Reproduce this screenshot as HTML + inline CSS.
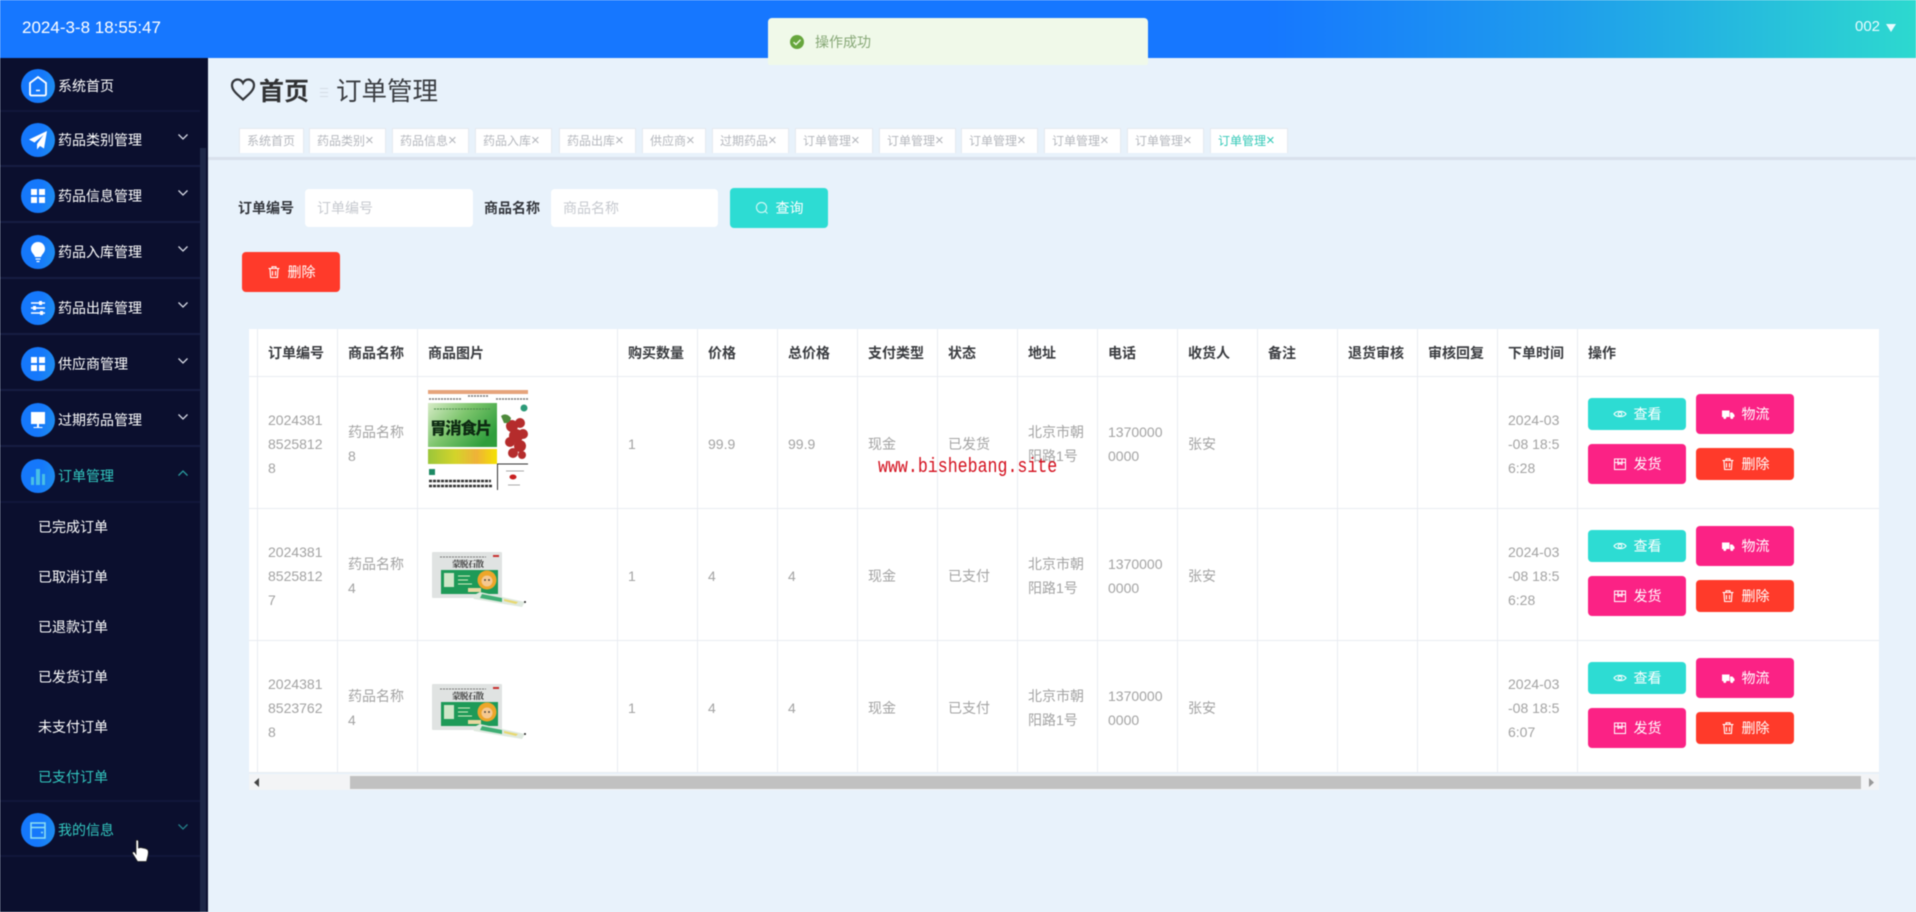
<!DOCTYPE html>
<html lang="zh-CN">
<head>
<meta charset="utf-8">
<title>订单管理</title>
<style>
*{box-sizing:border-box;margin:0;padding:0}
html,body{width:1916px;height:912px;overflow:hidden}
body{position:relative;background:#e8f2fb;font-family:"Liberation Sans","Noto Sans CJK SC",sans-serif;font-size:14px;color:#333;filter:blur(.45px)}
.a{position:absolute}
#hdr{left:0;top:0;width:1916px;height:58px;background:linear-gradient(90deg,#1677ff 0%,#1677ff 66%,#1f9eec 82%,#2dd9cf 100%)}
#date{left:22px;top:18px;font-size:17px;line-height:20px;color:#fff;white-space:nowrap}
#user{left:1855px;top:17px;font-size:15px;line-height:20px;color:#e8fbff}
#tri{left:1886px;top:24px;width:0;height:0;border-left:5.5px solid transparent;border-right:5.5px solid transparent;border-top:8px solid #e8fbff}
#toast{left:768px;top:18px;width:380px;height:47px;background:#f0f9e9;border-radius:4px 4px 2px 2px;z-index:5}
#toast span{position:absolute;left:47px;top:13px;line-height:22px;color:#87a877;white-space:nowrap}
#side{left:0;top:58px;width:208px;height:854px;background:#0b0f2e}
#sb{left:200px;top:148px;width:6px;height:764px;background:#1e2747;z-index:2}
.sep{position:absolute;left:0;width:200px;height:2px;background:#171c42;z-index:1}
.sep.f{background:#12173a}
.mi{position:absolute;left:58px;color:#fff;line-height:20px;white-space:nowrap;z-index:3}
.sub{position:absolute;left:38px;color:#fff;line-height:20px;white-space:nowrap;z-index:3}
.tl{color:#33c8c0}
.ic{position:absolute;left:21px;width:34px;height:34px;border-radius:50%;background:linear-gradient(100deg,#1578fb 55%,#1f90ec);z-index:3}
.ic svg{display:block}
.cv{position:absolute;left:177px;z-index:3}
#crumb1{left:259px;top:75px;font-size:25px;font-weight:700;line-height:34px;color:#303133;white-space:nowrap}
#crumb2{left:336px;top:75px;font-size:25.5px;line-height:34px;color:#3a3d42;white-space:nowrap}
#csep{left:320px;top:88px;width:8px;height:12px;background:repeating-linear-gradient(180deg,#d4dce6 0 1px,transparent 1px 4px)}
.tab{position:absolute;top:128px;height:25px;background:#fff;border:1px solid #e6e9ef;border-bottom:0;font-size:12px;line-height:24px;color:#b4b7bd;padding-left:7px;white-space:nowrap}
.tab i{font-style:normal;font-size:15px;line-height:0}
#tline{left:208px;top:157px;width:1708px;height:3px;background:#d9e1ec}
.lab{position:absolute;top:198px;font-weight:700;color:#33363c;line-height:20px;white-space:nowrap}
.inp{position:absolute;top:189px;height:38px;background:#fff;border-radius:4px;color:#c6c9cf;line-height:38px;padding-left:12px;white-space:nowrap}
.btn{position:absolute;border-radius:4px;color:#fff;text-align:center;white-space:nowrap;display:flex;align-items:center;justify-content:center;gap:7px;font-size:14px}
.teal{background:#2ddcd3}.pink{background:#fb2285}.red{background:#ff3a2a}
table{position:absolute;left:249px;top:329px;width:1630px;border-collapse:separate;border-spacing:0;table-layout:fixed;background:#fff}
td,th{border-right:1px solid #e9ecf1;border-bottom:1px solid #e9ecf1;padding:0 10px;text-align:left;vertical-align:middle;line-height:24px;white-space:nowrap;overflow:hidden;font-size:14px}
th{height:48px;font-weight:700;color:#3a3c40}
td{height:132px;color:#a3a3a3;padding-top:2px}
td:first-child,th:first-child{padding:0}
td:last-child,th:last-child{border-right:0}
#track{left:249px;top:774px;width:1630px;height:16px;background:#f3f4f6}
#thumb{left:350px;top:776px;width:1511px;height:13px;background:#c1c1c1}
#wm{left:878px;top:456px;font-family:"Liberation Mono",monospace;font-size:16.6px;line-height:22px;color:#d4101e;white-space:nowrap;z-index:4;transform:scaleY(1.2)}
#cur{left:131px;top:839px;z-index:6}
</style>
</head>
<body>
<svg width="0" height="0" style="position:absolute">
<symbol id="eye" viewBox="0 0 14 14"><path d="M1 7C3 3.500 11 3.500 13 7C11 10.500 3 10.500 1 7Z" fill="none" stroke="#fff" stroke-width="1.100"/><circle cx="7" cy="7" r="1.800" fill="none" stroke="#fff" stroke-width="1"/></symbol>
<symbol id="trk" viewBox="0 0 14 14"><path d="M1 3.500H8.500V10H1ZM9 5.500H11.500L13.500 8V10H9Z" fill="#fff"/><circle cx="3.800" cy="10.500" r="1.500" fill="#fff"/><circle cx="10.800" cy="10.500" r="1.500" fill="#fff"/></symbol>
<symbol id="box" viewBox="0 0 14 14"><path d="M1.500 2H12.500V12.500H1.500ZM1.500 5.500H12.500M5 2V7.500L7 6.500L9 7.500V2" fill="none" stroke="#fff" stroke-width="1"/></symbol>
<symbol id="trs" viewBox="0 0 14 14"><path d="M1.500 3.500H12.500M5 3.500V1.800H9V3.500M3 3.500L3.600 12.500H10.400L11 3.500M5.500 6V10.500M8.500 6V10.500" fill="none" stroke="#fff" stroke-width="1.100"/></symbol>
<symbol id="dn" viewBox="0 0 12 8"><path d="M1.500 1.500L6 6L10.500 1.500" fill="none" stroke="currentColor" stroke-width="1.300"/></symbol>
</svg>

<div class="a" id="hdr"></div>
<div class="a" id="date">2024-3-8 18:55:47</div>
<div class="a" id="user">002</div>
<div class="a" id="tri"></div>

<div class="a" id="toast">
<svg class="a" style="left:21px;top:16px" width="16" height="16" viewBox="0 0 16 16"><circle cx="8" cy="8" r="7" fill="#66a63c"/><path d="M4.500 8.200L7 10.500L11.500 5.800" fill="none" stroke="#e8f5dc" stroke-width="1.500"/></svg>
<span>操作成功</span>
</div>

<div class="a" id="side"></div>
<div class="a" id="sb"></div>
<div class="sep f" style="top:110px"></div>
<div class="sep" style="top:165px"></div>
<div class="sep" style="top:221px"></div>
<div class="sep" style="top:277px"></div>
<div class="sep" style="top:333px"></div>
<div class="sep" style="top:389px"></div>
<div class="sep" style="top:445px"></div>
<div class="sep f" style="top:501px"></div>
<div class="sep f" style="top:800px"></div>
<div class="sep f" style="top:855px"></div>

<div class="ic" style="top:69px"><svg width="34" height="34" viewBox="0 0 34 34"><path d="M17 8L25 14V25Q25 26.500 23.500 26.500H10.500Q9 26.500 9 25V14Z" fill="none" stroke="#fff" stroke-width="1.800"/><path d="M15 21.500H19" stroke="#fff" stroke-width="1.500"/></svg></div>
<div class="mi" style="top:76px">系统首页</div>

<div class="ic" style="top:123px"><svg width="34" height="34" viewBox="0 0 34 34"><path d="M26 8L8 16.500L13.500 19.500L22.500 12L16 21V26.500L19 23L23 25.500Z" fill="#fff"/></svg></div>
<div class="mi" style="top:130px">药品类别管理</div>
<svg class="cv" style="top:133px;color:#d5d8e4" width="12" height="8"><use href="#dn"/></svg>

<div class="ic" style="top:179px"><svg width="34" height="34" viewBox="0 0 34 34"><path d="M10 10H16V16H10ZM18 10H24V16H18ZM10 18H16V24H10ZM18 18H24V24H18Z" fill="#fff"/></svg></div>
<div class="mi" style="top:186px">药品信息管理</div>
<svg class="cv" style="top:189px;color:#d5d8e4" width="12" height="8"><use href="#dn"/></svg>

<div class="ic" style="top:235px"><svg width="34" height="34" viewBox="0 0 34 34"><path d="M17 7C12.500 7 10 10.500 10 14C10 17.500 13 19 14 22H20C21 19 24 17.500 24 14C24 10.500 21.500 7 17 7Z" fill="#fff"/><path d="M14.500 24H19.500M15.500 26.500H18.500" stroke="#fff" stroke-width="1.300"/></svg></div>
<div class="mi" style="top:242px">药品入库管理</div>
<svg class="cv" style="top:245px;color:#d5d8e4" width="12" height="8"><use href="#dn"/></svg>

<div class="ic" style="top:291px"><svg width="34" height="34" viewBox="0 0 34 34"><path d="M10 12H24M10 17H24M10 22H24" stroke="#fff" stroke-width="1.600"/><rect x="18" y="10" width="3" height="4" fill="#fff"/><rect x="12" y="15" width="3" height="4" fill="#fff"/><rect x="19" y="20" width="3" height="4" fill="#fff"/></svg></div>
<div class="mi" style="top:298px">药品出库管理</div>
<svg class="cv" style="top:301px;color:#d5d8e4" width="12" height="8"><use href="#dn"/></svg>

<div class="ic" style="top:347px"><svg width="34" height="34" viewBox="0 0 34 34"><path d="M10 10H16V16H10ZM18 10H24V16H18ZM10 18H16V24H10ZM18 18H24V24H18Z" fill="#fff"/></svg></div>
<div class="mi" style="top:354px">供应商管理</div>
<svg class="cv" style="top:357px;color:#d5d8e4" width="12" height="8"><use href="#dn"/></svg>

<div class="ic" style="top:403px"><svg width="34" height="34" viewBox="0 0 34 34"><path d="M10 9H24V21H10ZM16 21H18V24H16ZM12.500 24H21.500V25H12.500Z" fill="#fff"/></svg></div>
<div class="mi" style="top:410px">过期药品管理</div>
<svg class="cv" style="top:413px;color:#d5d8e4" width="12" height="8"><use href="#dn"/></svg>

<div class="ic" style="top:459px"><svg width="34" height="34" viewBox="0 0 34 34"><path d="M10 18H13V26H10ZM15 10H19V26H15ZM21 15H24V26H21Z" fill="#48bfe6"/></svg></div>
<div class="mi tl" style="top:466px">订单管理</div>
<svg class="cv" style="top:469px;color:#2a9a9e;transform:scaleY(-1)" width="12" height="8"><use href="#dn"/></svg>

<div class="sub" style="top:517px">已完成订单</div>
<div class="sub" style="top:567px">已取消订单</div>
<div class="sub" style="top:617px">已退款订单</div>
<div class="sub" style="top:667px">已发货订单</div>
<div class="sub" style="top:717px">未支付订单</div>
<div class="sub tl" style="top:767px">已支付订单</div>

<div class="ic" style="top:813px"><svg width="34" height="34" viewBox="0 0 34 34"><path d="M10 10H24V25H10ZM10 14.500H24M20 19.500H22" fill="none" stroke="#8fe0f2" stroke-width="1.500"/></svg></div>
<div class="mi tl" style="top:820px">我的信息</div>
<svg class="cv" style="top:823px;color:#247f88" width="12" height="8"><use href="#dn"/></svg>

<svg class="a" id="cur" width="19" height="25" viewBox="0 0 19 25"><path d="M5 1.500C6 .5 7.500 1 7.500 2.500V9L9.500 8.500L12 9L14.500 9.500L16.500 10.500C17.500 11.500 17.500 14 17 16.500L15.500 22.500H6.500L1.500 14.500C1 13 2.500 12 4 13.500L5 15Z" fill="#fff" stroke="#222" stroke-width=".8"/></svg>

<svg class="a" style="left:230px;top:77px" width="26" height="25" viewBox="0 0 26 25"><path d="M13 22.500C6 16.500 2 12.800 2 8.200C2 4.800 4.600 2.500 7.500 2.500C9.800 2.500 11.800 3.700 13 6C14.200 3.700 16.200 2.500 18.500 2.500C21.400 2.500 24 4.800 24 8.200C24 12.800 20 16.500 13 22.500Z" fill="none" stroke="#33363b" stroke-width="2.200"/></svg>
<div class="a" id="crumb1">首页</div>
<div class="a" id="csep"></div>
<div class="a" id="crumb2">订单管理</div>

<div class="tab" style="left:239px;width:65px">系统首页</div>
<div class="tab" style="left:309px;width:77px">药品类别<i>×</i></div>
<div class="tab" style="left:392px;width:77px">药品信息<i>×</i></div>
<div class="tab" style="left:475px;width:77px">药品入库<i>×</i></div>
<div class="tab" style="left:559px;width:77px">药品出库<i>×</i></div>
<div class="tab" style="left:642px;width:64px">供应商<i>×</i></div>
<div class="tab" style="left:712px;width:77px">过期药品<i>×</i></div>
<div class="tab" style="left:795px;width:78px">订单管理<i>×</i></div>
<div class="tab" style="left:879px;width:77px">订单管理<i>×</i></div>
<div class="tab" style="left:961px;width:77px">订单管理<i>×</i></div>
<div class="tab" style="left:1044px;width:77px">订单管理<i>×</i></div>
<div class="tab" style="left:1127px;width:77px">订单管理<i>×</i></div>
<div class="tab" style="left:1210px;width:78px;color:#35c9b8">订单管理<i>×</i></div>
<div class="a" id="tline"></div>

<div class="lab" style="left:238px">订单编号</div>
<div class="inp" style="left:305px;width:168px">订单编号</div>
<div class="lab" style="left:484px">商品名称</div>
<div class="inp" style="left:551px;width:167px">商品名称</div>
<div class="btn teal" style="left:730px;top:188px;width:98px;height:40px"><svg width="14" height="14" viewBox="0 0 14 14"><circle cx="6.500" cy="6.500" r="5" fill="none" stroke="#c8f7f4" stroke-width="1.200"/><path d="M10 10L12.500 12.500" stroke="#c8f7f4" stroke-width="1.200"/></svg>查询</div>
<div class="btn red" style="left:242px;top:252px;width:98px;height:40px"><svg width="14" height="14"><use href="#trs"/></svg>删除</div>

<table>
<colgroup><col style="width:9px"><col style="width:80px"><col style="width:80px"><col style="width:200px"><col style="width:80px"><col style="width:80px"><col style="width:80px"><col style="width:80px"><col style="width:80px"><col style="width:80px"><col style="width:80px"><col style="width:80px"><col style="width:80px"><col style="width:80px"><col style="width:80px"><col style="width:80px"><col style="width:301px"></colgroup>
<tr><th></th><th>订单编号</th><th>商品名称</th><th>商品图片</th><th>购买数量</th><th>价格</th><th>总价格</th><th>支付类型</th><th>状态</th><th>地址</th><th>电话</th><th>收货人</th><th>备注</th><th>退货审核</th><th>审核回复</th><th>下单时间</th><th>操作</th></tr>
<tr><td></td><td>2024381<br>8525812<br>8</td><td>药品名称<br>8</td><td></td><td>1</td><td>99.9</td><td>99.9</td><td>现金</td><td>已发货</td><td>北京市朝<br>阳路1号</td><td>1370000<br>0000</td><td>张安</td><td></td><td></td><td></td><td>2024-03<br>-08 18:5<br>6:28</td><td></td></tr>
<tr><td></td><td>2024381<br>8525812<br>7</td><td>药品名称<br>4</td><td></td><td>1</td><td>4</td><td>4</td><td>现金</td><td>已支付</td><td>北京市朝<br>阳路1号</td><td>1370000<br>0000</td><td>张安</td><td></td><td></td><td></td><td>2024-03<br>-08 18:5<br>6:28</td><td></td></tr>
<tr><td></td><td>2024381<br>8523762<br>8</td><td>药品名称<br>4</td><td></td><td>1</td><td>4</td><td>4</td><td>现金</td><td>已支付</td><td>北京市朝<br>阳路1号</td><td>1370000<br>0000</td><td>张安</td><td></td><td></td><td></td><td>2024-03<br>-08 18:5<br>6:07</td><td></td></tr>
</table>

<svg class="a" style="left:428px;top:390px" width="101" height="100" viewBox="0 0 101 100">
<defs>
<linearGradient id="g1" x1="0" y1="0" x2="1" y2=".6"><stop offset="0" stop-color="#d8ecc8"/><stop offset=".5" stop-color="#7cc46c"/><stop offset="1" stop-color="#2f9e3c"/></linearGradient>
<linearGradient id="g2" x1="0" x2="1"><stop offset="0" stop-color="#9cc63a"/><stop offset=".4" stop-color="#d4d42a"/><stop offset=".7" stop-color="#efb238"/><stop offset="1" stop-color="#f4e202"/></linearGradient>
</defs>
<rect width="101" height="100" fill="#fff"/>
<rect width="100" height="4" fill="#e6a47c"/>
<path d="M1 9H34M40 6H60M68 9H100" stroke="#777" stroke-width="1.500" stroke-dasharray="2 1"/>
<rect y="13" width="69" height="44" fill="url(#g1)"/>
<path d="M6 19H62" stroke="#4a8a4a" stroke-width="1" stroke-dasharray="2 1"/>
<text x="2" y="44" font-family="'Noto Sans CJK SC',sans-serif" font-size="16.500" font-weight="900" fill="#0d2a12" textLength="62">胃消食片</text>
<rect y="59" width="69" height="15" fill="url(#g2)"/>
<g fill="#b52c2c"><circle cx="84" cy="36" r="6"/><circle cx="92" cy="33" r="5"/><circle cx="88" cy="46" r="7"/><circle cx="95" cy="44" r="5"/><circle cx="82" cy="52" r="5"/><circle cx="92" cy="56" r="6"/><circle cx="85" cy="63" r="5"/><circle cx="94" cy="65" r="4"/></g>
<path d="M73 26Q78 22 83 28Q82 34 76 33Z" fill="#4e8a3c"/>
<circle cx="96" cy="18" r="3.500" fill="#2c9a78"/>
<path d="M69 74H100M69.500 74V100" stroke="#333" stroke-width="1"/>
<rect x="1" y="79" width="6" height="6" fill="#1d8a64"/>
<path d="M1 91H63M1 96H64" stroke="#333" stroke-width="2.500" stroke-dasharray="3 1"/>
<ellipse cx="85" cy="87" rx="3.500" ry="2.500" fill="#c82020"/>
<path d="M78 81H96M80 95H92" stroke="#aaa" stroke-width="1"/>
</svg>

<svg class="a" style="left:432px;top:552px" width="96" height="56" viewBox="0 0 96 56">
<rect width="70" height="46" rx="1" fill="#e0e3e2"/>
<path d="M8 5H54" stroke="#777" stroke-width="1" stroke-dasharray="2 1"/>
<path d="M61 4H67" stroke="#c83030" stroke-width="2"/>
<text x="20" y="15" font-family="'Noto Serif CJK SC',serif" font-size="8.500" font-weight="700" fill="#333" textLength="32">蒙脱石散</text>
<rect x="9" y="18" width="57" height="24" fill="#1e9a58"/>
<rect x="12" y="21" width="10" height="14" fill="#cfe6c8"/>
<path d="M26 24H38M26 28H36M26 32H40" stroke="#d4ecc0" stroke-width="1"/>
<rect x="36" y="36" width="13" height="4" fill="#e8d8a0"/>
<circle cx="55" cy="28" r="9.500" fill="#eda62a"/>
<circle cx="55" cy="29" r="5.500" fill="#f5c890"/>
<circle cx="53" cy="28" r=".9" fill="#333"/><circle cx="57" cy="28" r=".9" fill="#333"/>
<path d="M40 44L48 40L93 50L90 55L42 47Z" fill="#dfe9df"/>
<path d="M50 42L70 46L70 50L48 46Z" fill="#3fae74"/>
<path d="M72 47L86 50L84 52L72 49Z" fill="#e8d870"/>
<circle cx="93" cy="50" r="1" fill="#222"/>
</svg>

<svg class="a" style="left:432px;top:684px" width="96" height="56" viewBox="0 0 96 56">
<rect width="70" height="46" rx="1" fill="#e0e3e2"/>
<path d="M8 5H54" stroke="#777" stroke-width="1" stroke-dasharray="2 1"/>
<path d="M61 4H67" stroke="#c83030" stroke-width="2"/>
<text x="20" y="15" font-family="'Noto Serif CJK SC',serif" font-size="8.500" font-weight="700" fill="#333" textLength="32">蒙脱石散</text>
<rect x="9" y="18" width="57" height="24" fill="#1e9a58"/>
<rect x="12" y="21" width="10" height="14" fill="#cfe6c8"/>
<path d="M26 24H38M26 28H36M26 32H40" stroke="#d4ecc0" stroke-width="1"/>
<rect x="36" y="36" width="13" height="4" fill="#e8d8a0"/>
<circle cx="55" cy="28" r="9.500" fill="#eda62a"/>
<circle cx="55" cy="29" r="5.500" fill="#f5c890"/>
<circle cx="53" cy="28" r=".9" fill="#333"/><circle cx="57" cy="28" r=".9" fill="#333"/>
<path d="M40 44L48 40L93 50L90 55L42 47Z" fill="#dfe9df"/>
<path d="M50 42L70 46L70 50L48 46Z" fill="#3fae74"/>
<path d="M72 47L86 50L84 52L72 49Z" fill="#e8d870"/>
<circle cx="93" cy="50" r="1" fill="#222"/>
</svg>

<div class="btn teal" style="left:1588px;top:398px;width:98px;height:32px"><svg width="14" height="14"><use href="#eye"/></svg>查看</div>
<div class="btn pink" style="left:1696px;top:394px;width:98px;height:40px"><svg width="14" height="14"><use href="#trk"/></svg>物流</div>
<div class="btn pink" style="left:1588px;top:444px;width:98px;height:40px"><svg width="14" height="14"><use href="#box"/></svg>发货</div>
<div class="btn red" style="left:1696px;top:448px;width:98px;height:32px"><svg width="14" height="14"><use href="#trs"/></svg>删除</div>

<div class="btn teal" style="left:1588px;top:530px;width:98px;height:32px"><svg width="14" height="14"><use href="#eye"/></svg>查看</div>
<div class="btn pink" style="left:1696px;top:526px;width:98px;height:40px"><svg width="14" height="14"><use href="#trk"/></svg>物流</div>
<div class="btn pink" style="left:1588px;top:576px;width:98px;height:40px"><svg width="14" height="14"><use href="#box"/></svg>发货</div>
<div class="btn red" style="left:1696px;top:580px;width:98px;height:32px"><svg width="14" height="14"><use href="#trs"/></svg>删除</div>

<div class="btn teal" style="left:1588px;top:662px;width:98px;height:32px"><svg width="14" height="14"><use href="#eye"/></svg>查看</div>
<div class="btn pink" style="left:1696px;top:658px;width:98px;height:40px"><svg width="14" height="14"><use href="#trk"/></svg>物流</div>
<div class="btn pink" style="left:1588px;top:708px;width:98px;height:40px"><svg width="14" height="14"><use href="#box"/></svg>发货</div>
<div class="btn red" style="left:1696px;top:712px;width:98px;height:32px"><svg width="14" height="14"><use href="#trs"/></svg>删除</div>

<div class="a" id="track"></div>
<div class="a" id="thumb"></div>
<svg class="a" style="left:254px;top:778px" width="5" height="9"><path d="M5 0V9L0 4.500Z" fill="#444"/></svg>
<svg class="a" style="left:1869px;top:778px" width="5" height="9"><path d="M0 0V9L5 4.500Z" fill="#999"/></svg>

<div class="a" id="wm">www.bishebang.site</div>
</body>
</html>
